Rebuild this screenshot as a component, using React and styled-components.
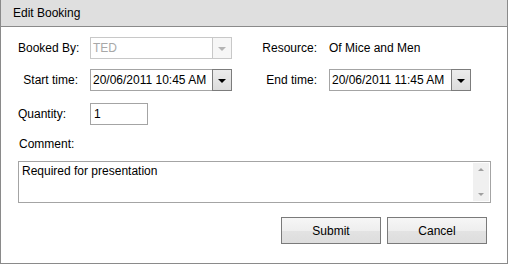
import styled, { createGlobalStyle } from 'styled-components';

const GlobalStyle = createGlobalStyle`
	html, body {
		margin: 0;
		padding: 0;
		background: #ffffff;
	}
	body {
		font-family: 'Liberation Sans', Arial, sans-serif;
		font-size: 12px;
		color: #000;
	}
`;

const Dialog = styled.div`
	width: 506px;
	height: 263px;
	border: 1px solid #8a8a8a;
	border-top: none;
	display: flex;
	flex-direction: column;
	background: #fff;
`;
const Header = styled.div`
	height: 26px;
	background: #dfdfdf;
	border-bottom: 1px solid #8a8a8a;
	display: flex;
	align-items: center;
	padding-left: 12px;
	font-size: 12px;
`;
const Body = styled.div`
	padding: 10px 0 0 17px;
	display: flex;
	flex-direction: column;
`;
const Row = styled.div`
	display: flex;
	align-items: center;
	height: 22px;
	margin-bottom: ${(p) => p.gap || 0}px;
`;
const Label = styled.div`
	width: ${(p) => p.width || 60}px;
	text-align: ${(p) => p.align || 'right'};
	margin-right: 12px;
	margin-left: ${(p) => p.offset || 0}px;
	white-space: nowrap;
`;
const Value = styled.div`
	white-space: nowrap;
`;
const Combo = styled.div`
	display: flex;
	width: 142px;
	height: 22px;
	box-sizing: border-box;
`;
const ComboText = styled.div`
	flex: 1;
	border: 1px solid ${(p) => (p.disabled ? '#c8c8c8' : '#a4a4a4')};
	border-right: none;
	color: ${(p) => (p.disabled ? '#a8a8a8' : '#000')};
	padding-left: 2px;
	display: flex;
	align-items: center;
	white-space: nowrap;
	overflow: hidden;
`;
const ComboButton = styled.div`
	width: 18px;
	border: 1px solid ${(p) => (p.disabled ? '#c8c8c8' : '#7c7c7c')};
	background: ${(p) =>
		p.disabled
			? '#f6f6f6'
			: 'linear-gradient(#ececec, #dcdcdc)'};
	display: flex;
	align-items: center;
	justify-content: center;
	&::after {
		content: '';
		margin-top: 2px;
		border-left: 4px solid transparent;
		border-right: 4px solid transparent;
		border-top: 4px solid ${(p) => (p.disabled ? '#b4b4b4' : '#000')};
	}
`;
const TextBox = styled.div`
	width: 58px;
	height: 22px;
	box-sizing: border-box;
	border: 1px solid #a4a4a4;
	padding-left: 3px;
	display: flex;
	align-items: center;
`;
const CommentLabel = styled.div`
	margin-top: 12px;
	height: 16px;
	padding-left: 1px;
`;
const TextArea = styled.div`
	margin-top: 8px;
	width: 473px;
	height: 42px;
	box-sizing: border-box;
	border: 1px solid #a4a4a4;
	display: flex;
`;
const AreaText = styled.div`
	flex: 1;
	padding: 2px 0 0 3px;
`;
const ScrollBar = styled.div`
	width: 16px;
	margin: 1px 1px 1px 0;
	background: #f0f0f0;
	display: flex;
	flex-direction: column;
	justify-content: space-between;
	align-items: center;
	padding: 5px 0;
`;
const Arrow = styled.div`
	border-left: 3px solid transparent;
	border-right: 3px solid transparent;
	${(p) => (p.up ? 'border-bottom' : 'border-top')}: 3px solid #a0a0a0;
`;
const Buttons = styled.div`
	display: flex;
	justify-content: flex-end;
	gap: 6px;
	margin-top: 14px;
	width: 469px;
`;
const Button = styled.button`
	width: 100px;
	height: 27px;
	border: 1px solid #7a7a7a;
	background: linear-gradient(#f6f6f6 0%, #eeeeee 50%, #e3e3e3 50%, #dddddd 100%);
	font-family: 'Liberation Sans', Arial, sans-serif;
	font-size: 12px;
	color: #000;
	padding: 0;
`;

const App = () => {
	return (
		<>
			<GlobalStyle />
			<Dialog>
				<Header>Edit Booking</Header>
				<Body>
					<Row gap={10}>
						<Label>Booked By:</Label>
						<Combo>
							<ComboText disabled>TED</ComboText>
							<ComboButton disabled />
						</Combo>
						<Label offset={27} width={58}>
							Resource:
						</Label>
						<Value>Of Mice and Men</Value>
					</Row>
					<Row gap={12}>
						<Label>Start time:</Label>
						<Combo>
							<ComboText>20/06/2011 10:45 AM</ComboText>
							<ComboButton />
						</Combo>
						<Label offset={27} width={58}>
							End time:
						</Label>
						<Combo>
							<ComboText>20/06/2011 11:45 AM</ComboText>
							<ComboButton />
						</Combo>
					</Row>
					<Row>
						<Label align="left">Quantity:</Label>
						<TextBox>1</TextBox>
					</Row>
					<CommentLabel>Comment:</CommentLabel>
					<TextArea>
						<AreaText>Required for presentation</AreaText>
						<ScrollBar>
							<Arrow up />
							<Arrow />
						</ScrollBar>
					</TextArea>
					<Buttons>
						<Button>Submit</Button>
						<Button>Cancel</Button>
					</Buttons>
				</Body>
			</Dialog>
		</>
	);
};

export default App;
